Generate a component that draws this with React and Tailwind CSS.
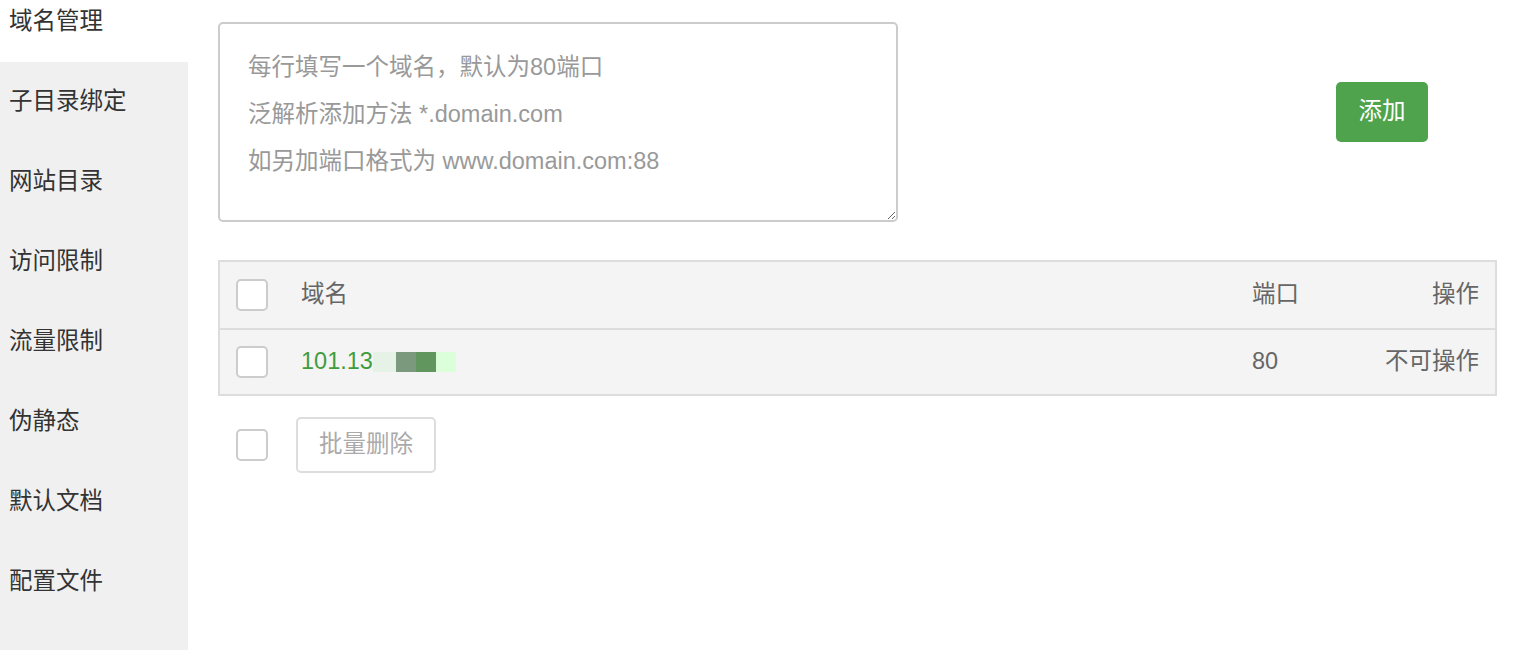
import React from 'react';

const menu = ['域名管理', '子目录绑定', '网站目录', '访问限制', '流量限制', '伪静态', '默认文档', '配置文件'];

function Box() {
  return <span className="block w-[32px] h-[32px] shrink-0 rounded-[5px] border-2 border-[#cccccc] bg-white" />;
}

export default function App() {
  return (
    <div className="flex h-[650px] overflow-hidden bg-white font-['Liberation_Sans','Noto_Sans_CJK_SC',sans-serif] text-[23.5px]">
      {/* side menu */}
      <div className="w-[188px] shrink-0 bg-[#f0f0f0]">
        <div className="-mt-[18px]">
          {menu.map((m, i) => (
            <div key={m} className={`h-[80px] flex items-center pl-[9px] text-[#333] ${i === 0 ? 'bg-white' : ''}`}>
              {m}
            </div>
          ))}
        </div>
      </div>

      <div className="flex-1 pl-[30px] pr-[17px] pt-[22px]">
        <div className="flex items-start">
          <textarea
            className="w-[680px] h-[200px] rounded-[5px] border-2 border-[#cccccc] px-[28px] pt-[20px] leading-[47px] text-[#333] outline-none placeholder:text-[#999]"
            placeholder={'每行填写一个域名，默认为80端口\n泛解析添加方法 *.domain.com\n如另加端口格式为 www.domain.com:88'}
          />
          <button className="ml-[438px] mt-[60px] w-[92px] h-[60px] rounded-[5px] bg-[#4fa34c] text-white">添加</button>
        </div>

        <div className="mt-[38px] border-2 border-[#dddddd] bg-[#f4f4f4] text-[#666]">
          <div className="flex items-center h-[66px] pl-[16px] pr-[16px]">
            <Box />
            <span className="ml-[33px] flex-1">域名</span>
            <span className="w-[127px]">端口</span>
            <span className="w-[100px] text-right whitespace-nowrap">操作</span>
          </div>
          <div className="flex items-center h-[66px] pl-[16px] pr-[16px] border-t-2 border-[#dddddd]">
            <Box />
            <span className="ml-[33px] flex-1 flex items-center">
              <span className="text-[#3f9c3c]">101.13</span>
              <span className="flex h-[20px]">
                <span className="w-[23px] bg-[#e6f2e6]" />
                <span className="w-[20px] bg-[#7b9a7d]" />
                <span className="w-[20px] bg-[#62965f]" />
                <span className="w-[20px] bg-[#dbffd9]" />
              </span>
            </span>
            <span className="w-[127px]">80</span>
            <span className="w-[100px] text-right whitespace-nowrap">不可操作</span>
          </div>
        </div>

        <div className="mt-[21px] flex items-center pl-[18px]">
          <Box />
          <button className="ml-[28px] w-[140px] h-[56px] rounded-[5px] border-2 border-[#dddddd] bg-white text-[#aaa]">批量删除</button>
        </div>
      </div>
    </div>
  );
}
